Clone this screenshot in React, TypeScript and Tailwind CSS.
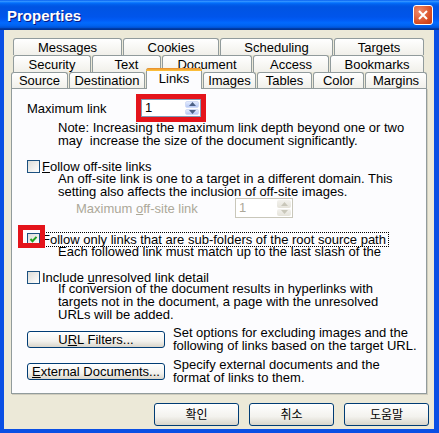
import React from "react";

const ROW1: [string, string][] = [
  ["Messages", "w-[109px]"],
  ["Cookies", "w-[96px]"],
  ["Scheduling", "w-[113px]"],
  ["Targets", "w-[90px]"],
];

const ROW2: [string, string][] = [
  ["Security", "w-[78px]"],
  ["Text", "w-[69px]"],
  ["Document", "w-[90px]"],
  ["Access", "w-[76px]"],
  ["Bookmarks", "w-[94px]"],
];

const ROW3: [string, string][] = [
  ["Source", "w-[57px]"],
  ["Destination", "w-[76px]"],
  ["Links", "w-[56px]"],
  ["Images", "w-[53px]"],
  ["Tables", "w-[55px]"],
  ["Color", "w-[51px]"],
  ["Margins", "w-[62px]"],
];

function Tab({ label, w, h }: { label: string; w: string; h: string }) {
  return (
    <div
      className={`${w} ${h} flex items-center justify-center rounded-t-[3px] border border-b-0 border-[#919B9C] bg-[linear-gradient(#FFFFFF,#F1F0EA)] text-[13px] leading-none text-black`}
    >
      {label}
    </div>
  );
}

function SelectedTab({ label, w }: { label: string; w: string }) {
  return (
    <div
      className={`${w} relative z-10 -mt-[4px] -mb-px flex h-[21px] flex-col rounded-t-[3px] border border-b-0 border-[#919B9C] bg-[#FCFCFE]`}
    >
      <div className="-mx-px -mt-px h-[3px] rounded-t-[3px] bg-[linear-gradient(#E68B2C,#FFC73C)]" />
      <div className="flex flex-1 items-center justify-center pb-[3px] text-[13px] leading-none text-black">
        {label}
      </div>
    </div>
  );
}

function Arrow({ up, color }: { up?: boolean; color: string }) {
  return (
    <svg width="7" height="4" viewBox="0 0 7 4">
      <path d={up ? "M0 4 L3.5 0 L7 4 Z" : "M0 0 L3.5 4 L7 0 Z"} fill={color} />
    </svg>
  );
}

function SpinButtons({ disabled }: { disabled?: boolean }) {
  const half = disabled
    ? "flex flex-1 items-center justify-center rounded-[2px] bg-[linear-gradient(#F3F2EE,#E5E3DA)]"
    : "flex flex-1 items-center justify-center rounded-[2px] border border-[#D2DCF6] bg-[linear-gradient(#E4ECFD,#B6C9F6)]";
  const color = disabled ? "#C9C7BA" : "#4D6185";
  return (
    <div className="flex w-[16px] flex-col gap-px p-px">
      <div className={half}>
        <Arrow up color={color} />
      </div>
      <div className={half}>
        <Arrow color={color} />
      </div>
    </div>
  );
}

function Check({ checked }: { checked?: boolean }) {
  return (
    <span className="relative flex h-[13px] w-[13px] shrink-0 items-center justify-center border border-[#1C5180] bg-[linear-gradient(135deg,#DCDCD7,#FFFFFF)]">
      {checked && (
        <svg width="9" height="9" viewBox="0 0 9 9">
          <path d="M1.5 4 L3.5 6.2 L7.5 1.8" stroke="#21A121" strokeWidth="2" fill="none" />
        </svg>
      )}
    </span>
  );
}

function PushButton({ children, className }: { children: React.ReactNode; className: string }) {
  return (
    <div
      className={`${className} flex items-center justify-center rounded-[3px] border border-[#003C74] bg-[linear-gradient(#FFFFFF_0%,#F3F2EE_60%,#D9D5CA_100%)] text-black`}
    >
      {children}
    </div>
  );
}

export default function App() {
  return (
    <div className="flex h-[433px] w-[439px] flex-col overflow-hidden bg-[#0A4FE4] font-['Liberation_Sans','Noto_Sans_CJK_KR',sans-serif] text-black">
      {/* title bar */}
      <div className="flex h-[30px] shrink-0 items-center justify-between bg-[linear-gradient(#0058EE_0%,#3593FF_4%,#288EFF_6%,#127DFF_8%,#036FFC_10%,#0262EE_14%,#0057E5_20%,#0054E3_24%,#0055EB_56%,#005BF5_66%,#026AFE_76%,#0062EF_86%,#0052D6_92%,#0040AB_94%,#003092_100%)] pl-[7px] pr-[6px]">
        <span className="text-[15px] font-bold leading-none text-white [text-shadow:1px_1px_#0A1883]">
          Properties
        </span>
        <div className="flex h-[20px] w-[20px] items-center justify-center rounded-[3px] border border-white bg-[radial-gradient(circle_at_30%_30%,#F08A6C,#D6491F_70%,#C23A14)]">
          <svg width="10" height="10" viewBox="0 0 10 10">
            <path d="M1 1 L9 9 M9 1 L1 9" stroke="#FFFFFF" strokeWidth="2" />
          </svg>
        </div>
      </div>

      {/* client */}
      <div className="mb-[4px] ml-[4px] mr-[5px] flex flex-1 flex-col bg-[#ECE9D8] px-[7px] pt-[8px]">
        <div className="flex h-[17px] gap-px pl-[2px]">
          {ROW1.map(([l, w]) => (
            <Tab key={l} label={l} w={w} h="h-[17px]" />
          ))}
        </div>
        <div className="flex h-[17px] gap-px pl-[2px]">
          {ROW2.map(([l, w]) => (
            <Tab key={l} label={l} w={w} h="h-[17px]" />
          ))}
        </div>
        <div className="flex h-[16px] items-start gap-px">
          {ROW3.map(([l, w]) =>
            l === "Links" ? <SelectedTab key={l} label={l} w={w} /> : <Tab key={l} label={l} w={w} h="h-[16px]" />
          )}
        </div>

        {/* panel */}
        <div className="flex h-[306px] flex-col border border-[#919B9C] bg-[#FCFCFE] pl-[15px] pt-[5px] text-[13px] leading-[13px] shadow-[1px_1px_0_#D0CDBE]">
          <div className="flex h-[28px] items-center">
            <span className="w-[109px] leading-none">Maximum link</span>
            <div className="flex h-[28px] w-[70px] border-[5px] border-[#E4141B]">
              <div className="flex h-full w-full border border-[#7F9DB9] bg-white">
                <span className="flex-1 pl-[3px] leading-[16px]">1</span>
                <SpinButtons />
              </div>
            </div>
          </div>
          <div className="-mt-px whitespace-nowrap pl-[31px]">
            Note: Increasing the maximum link depth beyond one or two
            <br />
            may&nbsp; increase the size of the document significantly.
          </div>

          <div className="mt-[13px] flex h-[13px] items-center">
            <Check />
            <span className="ml-[2px] leading-none">
              <u>F</u>ollow off-site links
            </span>
          </div>
          <div className="-mt-px whitespace-nowrap pl-[31px]">
            An off-site link is one to a target in a different domain. This
            <br />
            setting also affects the inclusion of off-site images.
          </div>
          <div className="flex h-[20px] items-center pl-[49px]">
            <span className="w-[159px] leading-none text-[#ACA899]">
              Maximum <u>o</u>ff-site link
            </span>
            <div className="flex h-[20px] w-[58px] border border-[#C9C7BA] bg-white">
              <span className="flex-1 pl-[3px] leading-[18px] text-[#ACA899]">1</span>
              <SpinButtons disabled />
            </div>
          </div>

          <div className="relative mt-[14px] flex h-[15px] items-center">
            <Check checked />
            <span className="ml-px border border-dotted border-black pr-[2px] leading-[13px]">
              Follow only links that are sub-folders of the root source path
            </span>
            <div className="absolute left-[-9px] top-[-7px] h-[23px] w-[27px] border-[5px] border-[#E4141B]" />
          </div>
          <div className="-mt-[2px] whitespace-nowrap pl-[31px]">
            Each followed link must match up to the last slash of the
          </div>

          <div className="mt-[13px] flex h-[13px] items-center">
            <Check />
            <span className="ml-[2px] leading-none">
              Include <u>u</u>nresolved link detail
            </span>
          </div>
          <div className="-mt-[2px] whitespace-nowrap pl-[31px]">
            If conversion of the document results in hyperlinks with
            <br />
            targets not in the document, a page with the unresolved
            <br />
            URLs will be added.
          </div>

          <div className="mt-[5px] flex h-[26px] items-center gap-[8px]">
            <PushButton className="h-[17px] w-[138px] text-[13px] leading-none">
              U<u>R</u>L Filters...
            </PushButton>
            <div className="whitespace-nowrap">
              Set options for excluding images and the
              <br />
              following of links based on the target URL.
            </div>
          </div>
          <div className="mt-[6px] flex h-[26px] items-center gap-[8px]">
            <PushButton className="h-[17px] w-[138px] text-[13px] leading-none">
              <u>E</u>xternal Documents...
            </PushButton>
            <div className="whitespace-nowrap">
              Specify external documents and the
              <br />
              format of links to them.
            </div>
          </div>
        </div>

        {/* dialog buttons */}
        <div className="-mr-[2px] mt-[9px] flex justify-end gap-[10px]">
          <PushButton className="h-[23px] w-[85px] text-[12px]">확인</PushButton>
          <PushButton className="h-[23px] w-[85px] text-[12px]">취소</PushButton>
          <PushButton className="h-[23px] w-[85px] text-[12px]">도움말</PushButton>
        </div>
      </div>
    </div>
  );
}
